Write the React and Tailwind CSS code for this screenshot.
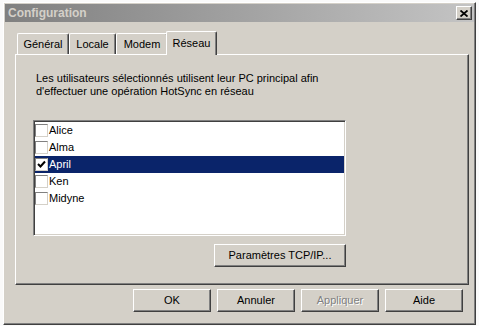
import React from "react";

const users = [
  { name: "Alice", checked: false },
  { name: "Alma", checked: false },
  { name: "April", checked: true, selected: true },
  { name: "Ken", checked: false },
  { name: "Midyne", checked: false },
];

const raised =
  "border border-t-white border-l-white border-r-[#404040] border-b-[#404040] shadow-[inset_-1px_-1px_0_#808080]";

function Button({ children, className = "", disabled }) {
  return (
    <div
      className={`${raised} h-[23px] flex items-center justify-center text-[11px] ${
        disabled ? "text-[#808080] [text-shadow:1px_1px_0_#fff]" : "text-black"
      } ${className}`}
    >
      {children}
    </div>
  );
}

function Tab({ label, selected, width }) {
  if (selected) {
    return (
      <div
        className="relative z-10 -mx-[2px] -mb-[1px] h-[24px] flex items-start justify-center pt-[3px] bg-[#d4d0c8] border-t border-l border-r border-t-white border-l-white border-r-[#404040] rounded-t-[2px] shadow-[inset_-1px_0_0_#808080]"
        style={{ width: width + 4 }}
      >
        {label}
      </div>
    );
  }
  return (
    <div
      className="h-[21px] flex items-center justify-center bg-[#d4d0c8] border-t border-l border-r border-t-white border-l-white border-r-[#404040] rounded-t-[2px] shadow-[inset_-1px_0_0_#808080]"
      style={{ width }}
    >
      {label}
    </div>
  );
}

function Checkbox({ checked }) {
  return (
    <div className="w-[13px] h-[13px] shrink-0 bg-white border border-t-[#808080] border-l-[#808080] border-r-[#d4d0c8] border-b-[#d4d0c8] flex items-center justify-center">
      {checked && (
        <svg width="9" height="9" viewBox="0 0 9 9">
          <path d="M1 4 L3.5 6.5 L8 1.5" fill="none" stroke="#000" strokeWidth="2" />
        </svg>
      )}
    </div>
  );
}

export default function App() {
  return (
    <div className="w-[479px] h-[326px] bg-[#fafafa] pl-[3px] pt-[2px] font-['Liberation_Sans',Arial,sans-serif] text-[11px] text-black">
      <div className="w-[473px] h-[323px] bg-[#d4d0c8] border border-t-white border-l-white border-r-[#404040] border-b-[#404040] shadow-[inset_-1px_-1px_0_#808080] p-[1px] flex flex-col">
        {/* title bar */}
        <div className="h-[18px] bg-linear-to-r from-[#808080] to-[#c4c4c4] flex items-center justify-between pl-[3px] pr-[2px]">
          <span className="text-[12px] font-bold text-[#d4d0c8]">Configuration</span>
          <div className={`${raised} w-[16px] h-[14px] bg-[#d4d0c8] flex items-center justify-center`}>
            <svg width="8" height="7" viewBox="0 0 8 7">
              <path d="M0.5 0.5 L7.5 6.5 M7.5 0.5 L0.5 6.5" stroke="#000" strokeWidth="1.8" />
            </svg>
          </div>
        </div>

        {/* tabs */}
        <div className="mt-[9px] pl-[10px] pr-[5px]">
          <div className="flex items-end pl-[2px] h-[23px]">
            <Tab label="Général" width={52} />
            <Tab label="Locale" width={47} />
            <Tab label="Modem" width={52} />
            <Tab label="Réseau" width={47} selected />
          </div>
          <div className="h-[231px] border border-t-white border-l-white border-r-[#404040] border-b-[#404040] shadow-[inset_-1px_-1px_0_#808080] pl-[17px] pt-[17px]">
            <p className="ml-[3px] leading-[13px]">
              Les utilisateurs sélectionnés utilisent leur PC principal afin
              <br />
              d'effectuer une opération HotSync en réseau
            </p>
            <div className="w-[313px] mt-[22px]">
              <div className="h-[116px] bg-white border border-t-[#808080] border-l-[#808080] border-r-white border-b-white shadow-[inset_1px_1px_0_#404040,inset_-1px_-1px_0_#d4d0c8] p-[1px]">
                {users.map((u) => (
                  <div
                    key={u.name}
                    className={`h-[17px] flex items-center gap-[1px] ${
                      u.selected ? "bg-[#0a246a] text-white" : ""
                    }`}
                  >
                    <Checkbox checked={u.checked} />
                    <span>{u.name}</span>
                  </div>
                ))}
              </div>
              <div className="flex justify-end mt-[8px]">
                <Button className="w-[132px]">Paramètres TCP/IP...</Button>
              </div>
            </div>
          </div>
        </div>

        {/* bottom buttons */}
        <div className="flex justify-end gap-[6px] mt-[4px] pr-[11px]">
          <Button className="w-[78px]">OK</Button>
          <Button className="w-[78px]">Annuler</Button>
          <Button className="w-[78px]" disabled>
            Appliquer
          </Button>
          <Button className="w-[78px]">Aide</Button>
        </div>
      </div>
    </div>
  );
}
